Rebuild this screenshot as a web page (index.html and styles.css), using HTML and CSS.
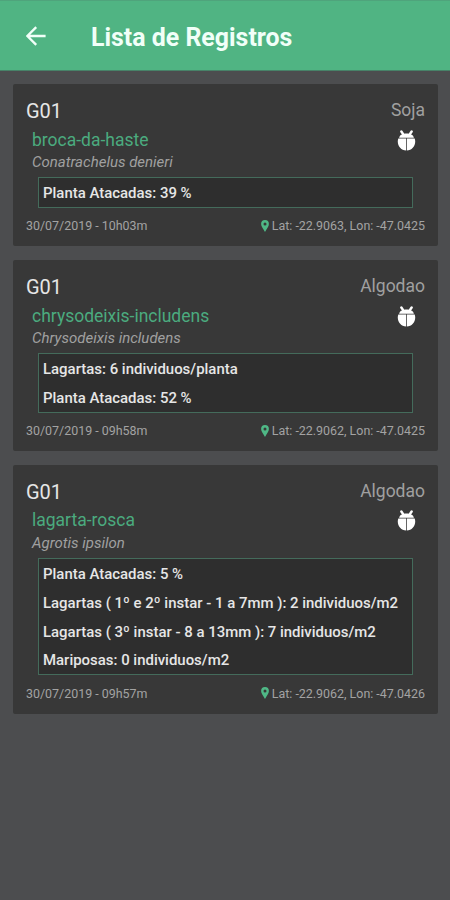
FILE: index.html
```html
<!DOCTYPE html>
<html lang="pt-BR">
<head>
    <meta charset="UTF-8">
    <meta name="viewport" content="width=device-width, initial-scale=1.0">
    <title>Lista de Registros</title>
    <link rel="stylesheet" href="styles.css">
</head>
<body>
    <!-- Shared icons -->
    <svg class="sprite" aria-hidden="true">
        <symbol id="bug" viewBox="0 0 20 22">
            <path d="M4.6 1.6 L6.8 4.8 M15.4 1.6 L13.2 4.8" fill="none" stroke="currentColor" stroke-width="2.6" stroke-linecap="round"/>
            <path d="M2.2 8 C3.4 2.2 16.6 2.2 17.8 8 Z" fill="currentColor"/>
            <path d="M9.6 8.8 H1.4 C-0.8 15 3.5 21.6 9.6 21.6 Z M10.4 8.8 H18.6 C20.8 15 16.5 21.6 10.4 21.6 Z" fill="currentColor"/>
        </symbol>
        <symbol id="pin" viewBox="0 0 8 12">
            <path d="M4 0 A3.9 3.9 0 0 0 0.1 3.9 C0.1 6.1 2 8 4 12 C6 8 7.9 6.1 7.9 3.9 A3.9 3.9 0 0 0 4 0 Z M4 2.4 A1.5 1.5 0 1 1 4 5.4 A1.5 1.5 0 1 1 4 2.4 Z" fill="currentColor" fill-rule="evenodd"/>
        </symbol>
    </svg>

    <header class="app-bar">
        <svg class="back" viewBox="0 0 20 20">
            <path d="M19.6 10 H1.6 M10.2 1.1 L1.4 10 L10.2 18.9" fill="none" stroke="currentColor" stroke-width="2.3"/>
        </svg>
        <h1 class="title">Lista de Registros</h1>
    </header>

    <main class="list">
        <article class="card">
            <div class="card-top">
                <span class="plot">G01</span>
                <span class="crop">Soja</span>
            </div>
            <div class="pest">
                <span class="pest-name">broca-da-haste</span>
                <svg class="bug"><use href="#bug"/></svg>
            </div>
            <div class="species">Conatrachelus denieri</div>
            <ul class="counts">
                <li>Planta Atacadas: 39 %</li>
            </ul>
            <div class="card-footer">
                <span>30/07/2019 - 10h03m</span>
                <span class="place"><svg class="pin"><use href="#pin"/></svg>Lat: -22.9063, Lon: -47.0425</span>
            </div>
        </article>

        <article class="card">
            <div class="card-top">
                <span class="plot">G01</span>
                <span class="crop">Algodao</span>
            </div>
            <div class="pest">
                <span class="pest-name">chrysodeixis-includens</span>
                <svg class="bug"><use href="#bug"/></svg>
            </div>
            <div class="species">Chrysodeixis includens</div>
            <ul class="counts">
                <li>Lagartas: 6 individuos/planta</li>
                <li>Planta Atacadas: 52 %</li>
            </ul>
            <div class="card-footer">
                <span>30/07/2019 - 09h58m</span>
                <span class="place"><svg class="pin"><use href="#pin"/></svg>Lat: -22.9062, Lon: -47.0425</span>
            </div>
        </article>

        <article class="card">
            <div class="card-top">
                <span class="plot">G01</span>
                <span class="crop">Algodao</span>
            </div>
            <div class="pest">
                <span class="pest-name">lagarta-rosca</span>
                <svg class="bug"><use href="#bug"/></svg>
            </div>
            <div class="species">Agrotis ipsilon</div>
            <ul class="counts">
                <li>Planta Atacadas: 5 %</li>
                <li>Lagartas ( 1º e 2º instar - 1 a 7mm ): 2 individuos/m2</li>
                <li>Lagartas ( 3º instar - 8 a 13mm ): 7 individuos/m2</li>
                <li>Mariposas: 0 individuos/m2</li>
            </ul>
            <div class="card-footer">
                <span>30/07/2019 - 09h57m</span>
                <span class="place"><svg class="pin"><use href="#pin"/></svg>Lat: -22.9062, Lon: -47.0426</span>
            </div>
        </article>
    </main>
</body>
</html>
```
FILE: styles.css
```css
* {
    box-sizing: border-box;
}

body {
    margin: 0;
    min-height: 100vh;
    background-color: #4c4d4f;
    font-family: Roboto, sans-serif;
    color: #e6e6e6;
}

.sprite {
    display: none;
}

/* Top bar */
.app-bar {
    display: flex;
    align-items: center;
    height: 71px;
    padding: 4px 26px 0;
    background-color: #50b483;
    border-top: 1px solid #4fa47c;
    border-bottom: 1px solid #478268;
    color: #f1fff8;
}

.back {
    width: 20px;
    height: 20px;
    margin: 0 45px 3px 0;
}

.title {
    margin: 0;
    font-size: 24.9px;
    font-weight: 700;
    line-height: 30px;
}

/* Records */
.list {
    display: flex;
    flex-direction: column;
    gap: 13.8px;
    padding: 13px 12px 13px 13px;
}

.card {
    padding: 13px 13px 10.8px;
    background-color: #383838;
    border-radius: 2px;
}

.card-top {
    display: flex;
    justify-content: space-between;
    height: 28px;
    line-height: 28px;
}

.plot {
    font-size: 20px;
}

.crop {
    font-size: 17.5px;
    line-height: 26px;
    color: #a0a0a0;
}

.pest {
    display: flex;
    justify-content: space-between;
    align-items: center;
    height: 29px;
    padding: 0 9px 0 6px;
}

.pest-name {
    font-size: 17.5px;
    color: #4bab7f;
}

.bug {
    width: 19px;
    height: 21px;
    margin-top: 1px;
    color: #ffffff;
}

.species {
    height: 17px;
    padding-left: 6px;
    font-size: 15px;
    font-style: italic;
    line-height: 17px;
    color: #a0a0a0;
}

.counts {
    margin: 6px 12px 0;
    padding: 0 4px;
    list-style: none;
    background-color: #2e2e2e;
    border: 1px solid #446b5b;
    font-size: 14.95px;
    font-weight: 500;
}

.counts li {
    height: 28.8px;
    line-height: 31px;
    white-space: nowrap;
}

.card-footer {
    display: flex;
    justify-content: space-between;
    margin-top: 8.7px;
    font-size: 12.45px;
    line-height: 19px;
    color: #a3a3a3;
}

.place {
    display: flex;
    align-items: center;
}

.pin {
    width: 8px;
    height: 12px;
    margin-right: 3px;
    color: #4fb886;
}
```
